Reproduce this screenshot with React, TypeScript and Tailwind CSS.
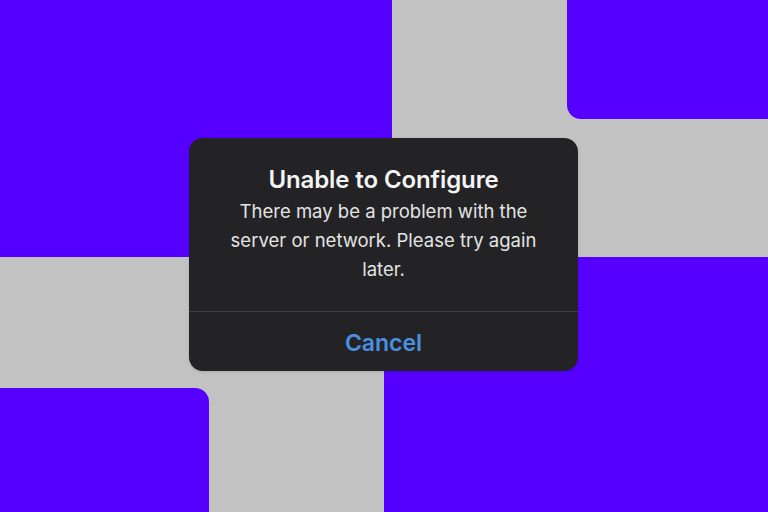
import { useState } from 'react';

// Alert sheet shown over a blocky two-tone backdrop
function AlertDialog({ onCancel }: { onCancel: () => void }) {
  return (
    <div className="w-[389px] h-[233px] rounded-[14px] bg-[#232325] flex flex-col overflow-hidden shadow-sm">
      <div className="flex-1 flex flex-col items-center pt-[27px] px-6 text-center">
        <h1 className="text-[24px] leading-[30px] font-semibold text-[#f4f4f4] tracking-[-0.1px]">
          Unable to Configure
        </h1>
        <p className="mt-[2px] text-[18.5px] leading-[29px] text-[#e4e4e4] max-w-[320px]">
          There may be a problem with the server or network. Please try again later.
        </p>
      </div>
      <div className="h-px bg-[#3d3d40]" />
      <button
        onClick={onCancel}
        className="h-[59px] flex items-center justify-center text-[23px] font-semibold text-[#4a90e2] pt-[3px]"
      >
        Cancel
      </button>
    </div>
  );
}

export default function App() {
  const [open, setOpen] = useState(true);

  return (
    <div
      className="relative w-[768px] h-[512px] bg-[#c2c2c2] flex flex-col overflow-hidden"
      style={{ fontFamily: 'Inter, "Noto Sans", sans-serif' }}
    >
      {/* top band */}
      <div className="h-[257px] flex">
        <div className="w-[392px] bg-[#5500ff]" />
        <div className="flex-1" />
        <div className="w-[201px] h-[119px] bg-[#5500ff] rounded-bl-[14px]" />
      </div>
      {/* bottom band */}
      <div className="flex-1 flex">
        <div className="w-[384px] flex flex-col justify-end">
          <div className="w-[209px] h-[124px] bg-[#5500ff] rounded-tr-[14px]" />
        </div>
        <div className="flex-1 bg-[#5500ff]" />
      </div>

      {open && (
        <div className="absolute left-[189px] top-[138px]">
          <AlertDialog onCancel={() => setOpen(false)} />
        </div>
      )}
    </div>
  );
}
